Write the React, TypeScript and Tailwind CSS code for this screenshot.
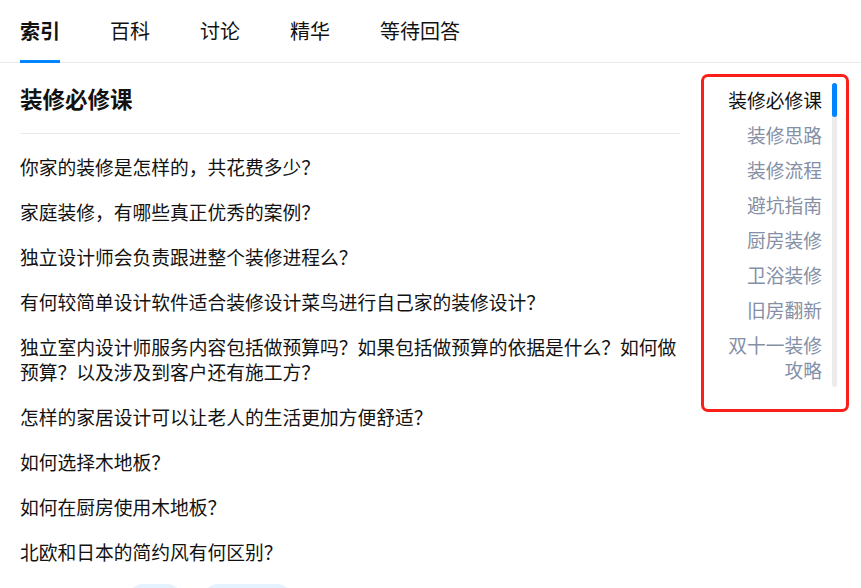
import React from "react";

const tabs = ["索引", "百科", "讨论", "精华", "等待回答"];

const questions = [
  "你家的装修是怎样的，共花费多少？",
  "家庭装修，有哪些真正优秀的案例？",
  "独立设计师会负责跟进整个装修进程么？",
  "有何较简单设计软件适合装修设计菜鸟进行自己家的装修设计？",
  "独立室内设计师服务内容包括做预算吗？如果包括做预算的依据是什么？如何做预算？以及涉及到客户还有施工方？",
  "怎样的家居设计可以让老人的生活更加方便舒适？",
  "如何选择木地板？",
  "如何在厨房使用木地板？",
  "北欧和日本的简约风有何区别？",
];

const chapters = [
  "装修必修课",
  "装修思路",
  "装修流程",
  "避坑指南",
  "厨房装修",
  "卫浴装修",
  "旧房翻新",
  "双十一装修攻略",
];

export default function App() {
  return (
    <div className="w-[861px] h-[588px] overflow-hidden bg-white text-[#121212] font-['Noto_Sans_CJK_SC',sans-serif]">
      {/* 顶部标签栏 */}
      <div className="h-[63px] border-b border-[#ebebeb] flex gap-[50px] pl-5">
        {tabs.map((t, i) => (
          <div
            key={t}
            className={`relative h-full flex items-center text-[20px] leading-[28px] ${
              i === 0 ? "font-semibold" : ""
            }`}
          >
            {t}
            {i === 0 && (
              <div className="absolute left-0 right-0 -bottom-px h-[3px] bg-[#0084ff]" />
            )}
          </div>
        ))}
      </div>

      <div className="flex pl-5">
        {/* 主体列表 */}
        <div className="w-[660px] shrink-0 pt-5">
          <h2 className="text-[22.5px] leading-[30px] font-semibold pb-5 border-b border-[#ebebeb]">
            装修必修课
          </h2>
          <ul className="mt-5 flex flex-col gap-5">
            {questions.map((q) => (
              <li key={q} className="text-[18.75px] leading-[25px]">
                {q}
              </li>
            ))}
          </ul>
          <div className="mt-5 flex gap-[21px] pl-[108px]">
            <span className="h-[30px] w-[54px] rounded-full bg-[#e5f2ff]" />
            <span className="h-[30px] w-[89px] rounded-full bg-[#e5f2ff]" />
          </div>
        </div>

        {/* 目录侧栏 */}
        <div className="ml-[21px] mt-[11px] w-[148px] h-[338px] shrink-0 border-[3px] border-[#fa2019] rounded-[7px] flex justify-end pr-[9px] pt-[6px] gap-[10px]">
          <div className="flex flex-col gap-[10px] pt-1 text-right text-[18.75px] leading-[25px] w-[112px]">
            {chapters.map((c, i) => (
              <div key={c} className={i === 0 ? "text-[#121212]" : "text-[#8590a6]"}>
                {c}
              </div>
            ))}
          </div>
          <div className="w-[5px] h-[304px] rounded-full bg-[#ebebeb] shrink-0">
            <div className="h-[34px] rounded-full bg-[#0084ff]" />
          </div>
        </div>
      </div>
    </div>
  );
}
